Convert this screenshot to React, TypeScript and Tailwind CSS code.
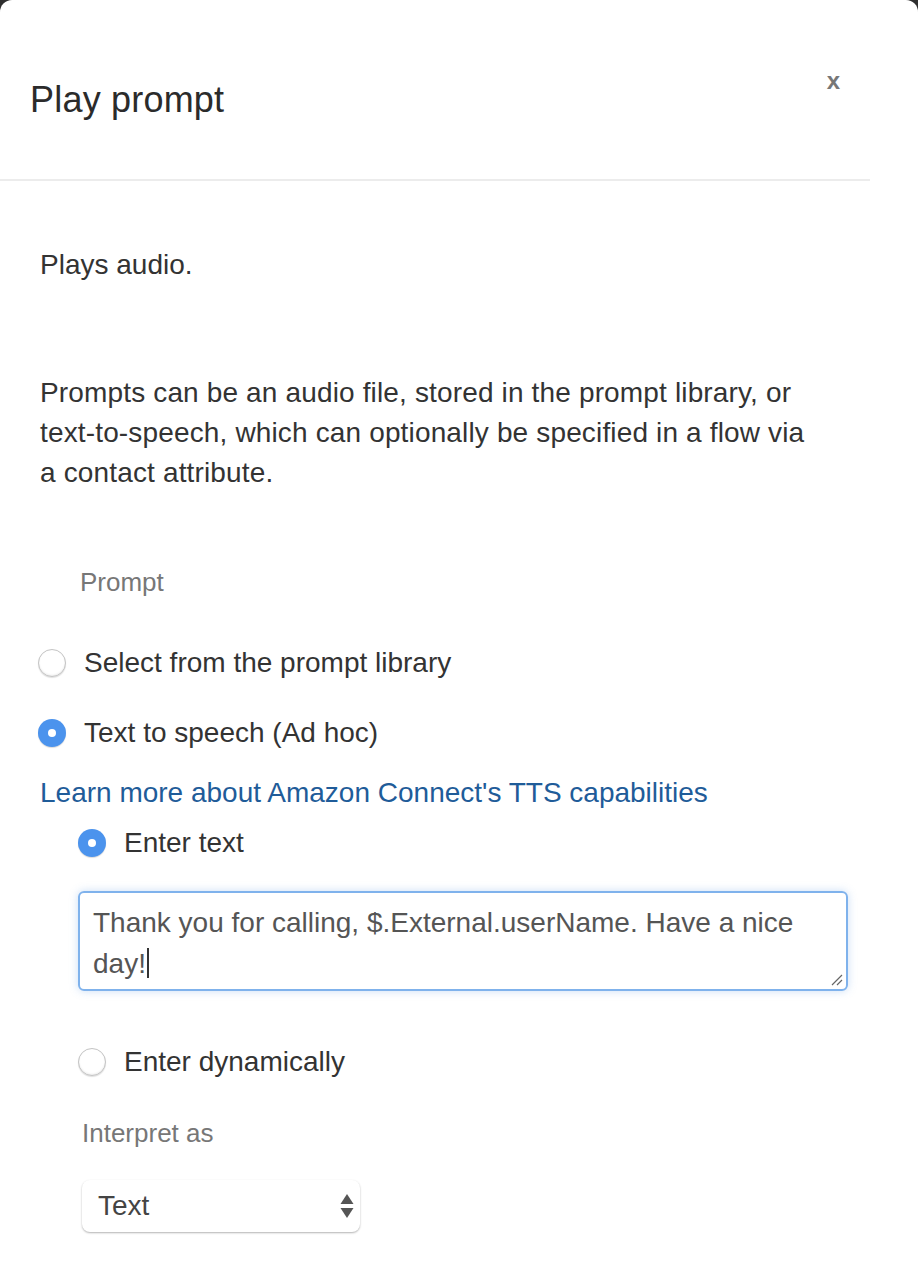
import React from "react"

function Radio({ checked }: { checked?: boolean }) {
  if (checked) {
    return (
      <span className="flex h-[28px] w-[28px] shrink-0 items-center justify-center rounded-full bg-[#4b93ed] shadow-[0_1px_1px_rgba(0,0,0,0.15)]">
        <span className="h-[8px] w-[8px] rounded-full bg-white" />
      </span>
    )
  }
  return (
    <span className="h-[28px] w-[28px] shrink-0 rounded-full border border-[#c4c4c4] bg-white shadow-[inset_0_-1px_2px_rgba(0,0,0,0.08),0_1px_1px_rgba(0,0,0,0.12)]" />
  )
}

function Option({ checked, label }: { checked?: boolean; label: string }) {
  return (
    <label className="flex items-center gap-[18px] text-[28px] leading-[40px] text-[#333]">
      <Radio checked={checked} />
      <span>{label}</span>
    </label>
  )
}

export default function App() {
  return (
    <div
      className="min-h-[1268px] bg-[#2f2f2f]"
      style={{ fontFamily: '"Liberation Sans", Arial, sans-serif' }}
    >
      <div className="min-h-[1268px] rounded-t-[12px] bg-white">
        <header className="flex h-[181px] w-[870px] items-start justify-between border-b-2 border-[#ececec] pl-[30px] pr-[30px]">
          <h1 className="pt-[78px] text-[36px] leading-[44px] tracking-[0.2px] text-[#2b2b2b]">Play prompt</h1>
          <button className="pt-[63px] text-[24px] font-bold leading-[36px] text-[#777]">x</button>
        </header>

        <div className="px-[40px] pt-[64px] text-[28px] leading-[40px] text-[#333]">
          <p>Plays audio.</p>
          <p className="mt-[88px] w-[820px] tracking-[0.15px]">
            Prompts can be an audio file, stored in the prompt library, or
            <br />
            text-to-speech, which can optionally be specified in a flow via
            <br />
            a contact attribute.
          </p>

          <div className="mt-[69px] pl-[40px] text-[26px] leading-[40px] text-[#777]">Prompt</div>

          <div className="mt-[41px] -ml-[2px] flex flex-col gap-[30px]">
            <Option label="Select from the prompt library" />
            <Option checked label="Text to speech (Ad hoc)" />
          </div>

          <a href="#" className="mt-[20px] block text-[#1f5c99]">
            Learn more about Amazon Connect's TTS capabilities
          </a>

          <div className="ml-[38px] mt-[10px]">
            <Option checked label="Enter text" />

            <div className="relative mt-[28px] h-[100px] w-[770px] rounded-[6px] border-2 border-[#7fb2ec] px-[13px] pt-[10px] text-[28px] leading-[40px] text-[#555] shadow-[0_0_8px_rgba(102,160,230,0.35)]">
              Thank you for calling, $.External.userName. Have a nice
              <br />
              day!
              <span className="ml-[1px] inline-block h-[30px] w-[2px] translate-y-[5px] bg-[#333]" />
              <svg className="absolute bottom-[3px] right-[3px]" width="14" height="14" viewBox="0 0 14 14">
                <path d="M13 3 L3 13 M13 8 L8 13" stroke="#666" strokeWidth="1.2" fill="none" />
              </svg>
            </div>

            <div className="mt-[51px]">
              <Option label="Enter dynamically" />
            </div>

            <div className="mt-[31px] pl-[4px] text-[26px] leading-[40px] text-[#777]">Interpret as</div>

            <div className="ml-[4px] mt-[27px] flex h-[52px] w-[278px] items-center justify-between rounded-[8px] pl-[16px] pr-[6px] text-[28px] text-[#444] shadow-[0_1px_2px_rgba(0,0,0,0.3)]">
              <span>Text</span>
              <svg width="14" height="30" viewBox="0 0 14 30">
                <path d="M7 3 L13.5 13 L0.5 13 Z" fill="#555" />
                <path d="M7 27 L13.5 17 L0.5 17 Z" fill="#555" />
              </svg>
            </div>
          </div>
        </div>
      </div>
    </div>
  )
}
